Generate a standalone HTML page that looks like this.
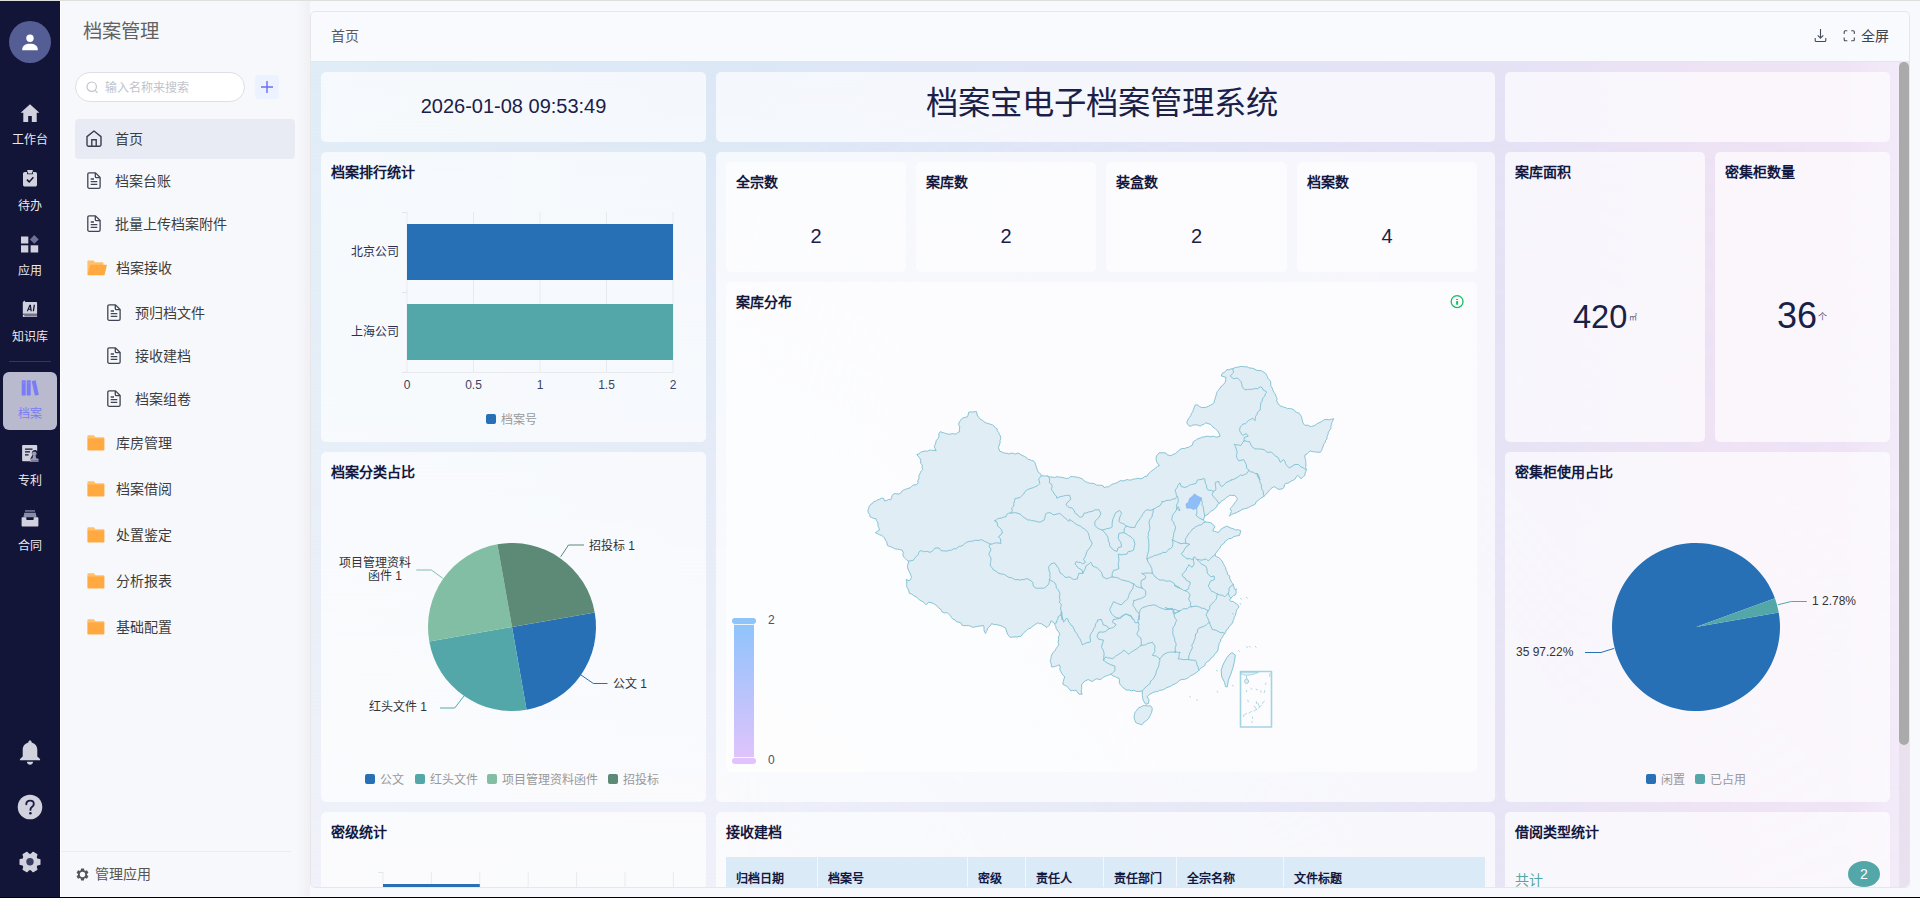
<!DOCTYPE html>
<html lang="zh-CN">
<head>
<meta charset="utf-8">
<title>档案管理</title>
<style>
*{box-sizing:border-box;margin:0;padding:0}
html,body{width:1920px;height:898px;overflow:hidden}
body{font-family:"Liberation Sans",sans-serif;position:relative;background:#f8f9fd;color:#333;font-size:14px}
.a{position:absolute}
svg{position:absolute;overflow:visible}
#topline{left:0;top:0;width:1920px;height:1px;background:#dee0de}
#botline{left:0;top:897px;width:1920px;height:1px;background:#000}
#nav{left:0;top:1px;width:60px;height:896px;background:#121438}
#navsep{left:60px;top:1px;width:1px;height:896px;background:#fff}
.nl{left:0;width:60px;text-align:center;font-size:12px;line-height:14px;color:#e9e9ee}
#side{left:61px;top:1px;width:249px;height:895px;background:#f7f8fc}
#sideshadow{left:296px;top:1px;width:14px;height:895px;background:linear-gradient(to right,rgba(235,235,240,0),rgba(239,239,244,.95))}
.mi{font-size:14px;line-height:20px;color:#3d3d3d;white-space:nowrap}
#main{left:311px;top:11px;width:1598px;height:877px;border:1px solid #e7e7ea;border-radius:8px 8px 8px 8px;background:#f9fafe;overflow:hidden}
#dash{left:0;top:50px;width:1596px;height:825px;background:linear-gradient(to right,#dbe9f6 0%,#dfe7f6 40%,#e6e2f5 70%,#efe0f6 100%)}
.c{position:absolute;background:rgba(255,255,255,.69);border-radius:5px}
.ci{position:absolute;background:rgba(255,255,255,.62);border-radius:5px}
.t{position:absolute;font-size:13px;font-weight:bold;color:#14183f;line-height:16px;white-space:nowrap}
.lg{position:absolute;font-size:12px;color:#999;line-height:14px;white-space:nowrap}
.lb{position:absolute;font-size:12px;color:#333;line-height:14px;white-space:nowrap}
</style>
</head>
<body>
<div class="a" id="nav"></div>
<div class="a" id="navsep"></div>
<div class="a" id="topline"></div>
<!-- avatar -->
<div class="a" style="left:9px;top:21px;width:42px;height:42px;border-radius:50%;background:#555e94"></div>
<svg style="left:20px;top:32px" width="20" height="20" viewBox="0 0 20 20"><circle cx="10" cy="6.2" r="3.7" fill="#fff"/><path d="M2.2 17.6c0-4 3.3-5.8 7.8-5.8s7.8 1.8 7.8 5.8v.6H2.2z" fill="#fff"/></svg>
<!-- 工作台 -->
<svg style="left:20px;top:103px" width="20" height="20" viewBox="0 0 20 20"><path d="M10 1.2L.6 9.8h2.7V19h4.9v-6h3.6v6h4.9V9.8h2.7z" fill="#d2d2de"/></svg>
<div class="a nl" style="top:133px">工作台</div>
<!-- 待办 -->
<svg style="left:22px;top:170px" width="16" height="17" viewBox="0 0 16 17"><path d="M5 1.9V1.2C5 .5 5.5 0 6.2 0h3.6C10.500 0 11 .5 11 1.200v.7h2.200c1 0 1.800.8 1.800 1.800v11.100c0 1-.8 1.800-1.800 1.800H2.800c-1 0-1.800-.8-1.800-1.800V3.700c0-1 .8-1.800 1.800-1.800z" fill="#d2d2de"/><rect x="5" y="1.300" width="6" height="2.900" rx=".6" fill="#121438"/><rect x="5.800" y=".8" width="4.400" height="2.600" rx=".5" fill="#d2d2de"/><path d="M4.900 9.600l2.300 2.300 4.200-4.600" fill="none" stroke="#121438" stroke-width="1.500"/></svg>
<div class="a nl" style="top:199px">待办</div>
<!-- 应用 -->
<svg style="left:21px;top:235px" width="18" height="18" viewBox="0 0 18 18"><rect x="0" y="1.500" width="7.300" height="7" fill="#d2d2de"/><rect x="0" y="10.300" width="7.300" height="7.200" fill="#d2d2de"/><rect x="9.600" y="10.300" width="7.600" height="7.200" fill="#d2d2de"/><path d="M13.300 0l4.400 4.400-4.400 4.400-4.400-4.400z" fill="#6e7196"/></svg>
<div class="a nl" style="top:264px">应用</div>
<!-- 知识库 -->
<svg style="left:22px;top:300px" width="16" height="18" viewBox="0 0 16 18"><path d="M.8 2.200L2.400.6l1 1.300h10.800c.5 0 .9.400.9.900v10.900H.8z" fill="#d2d2de"/><path d="M.8 14.600h14.300v1H2.300v.6h12.800v.9H1.700c-.5 0-.9-.4-.9-.9z" fill="#d2d2de"/><path d="M4.800 11.200l2.600-6.400h1.500l.9 6.400H8.500l-.15-1.400H6.500l-.5 1.400zM7 8.700h1.250L8 6.400zM10.700 11.200l1-6.400H13l-1 6.400z" fill="#121438"/></svg>
<div class="a nl" style="top:330px">知识库</div>
<div class="a" style="left:9px;top:361px;width:42px;height:1px;background:#33365a"></div>
<!-- 档案 active -->
<div class="a" style="left:3px;top:372px;width:54px;height:58px;border-radius:6px;background:#b9bace"></div>
<svg style="left:21px;top:380px" width="18" height="16" viewBox="0 0 18 16"><rect x=".7" y=".3" width="4" height="15.200" rx=".5" fill="#7a7cf6"/><rect x="5.700" y=".3" width="4" height="15.200" rx=".5" fill="#7a7cf6"/><path d="M10.700 1.200l3.400-.9c.3-.1.500.1.600.3l3 13.700c.1.300-.1.500-.3.600l-3 .7c-.3.100-.500-.1-.600-.3z" fill="#7a7cf6"/><path d="M2 2.500h1.400v.8H2zM7 2.500h1.400v.8H7z" fill="#b9bace" opacity=".7"/></svg>
<div class="a nl" style="top:407px;color:#7a7cf6">档案</div>
<!-- 专利 -->
<svg style="left:22px;top:445px" width="17" height="17" viewBox="0 0 17 17"><path d="M1 0h13.300c.5 0 .9.400.9.900v5.300c-.9-1.200-2.700-1.500-4-.6-1.500 1-1.800 3-.8 4.400l-1.800 3.200c-.3.600-.2 1.300.2 1.800l.8 1.200H1c-.5 0-.9-.4-.9-.9V.9C.100.400.500 0 1 0z" fill="#d2d2de"/><path d="M3 3.400h7.500v1.300H3zM3 6.300h5v1.300H3zM3 9.200h3.600v1.300H3z" fill="#121438"/><circle cx="12.300" cy="8.700" r="2.300" fill="#9a9bb5"/><path d="M11 10.800h2.600l.7 2.600h1.400c.5 0 .9.400.9.900v1.500H8v-1.500c0-.5.400-.9.900-.9h1.400z" fill="#9a9bb5"/><rect x="8" y="16.200" width="8.600" height=".8" fill="#9a9bb5"/></svg>
<div class="a nl" style="top:474px">专利</div>
<!-- 合同 -->
<svg style="left:21px;top:510px" width="18" height="17" viewBox="0 0 18 17"><rect x="4" y=".3" width="10" height="1.300" fill="#8b8ca8"/><path d="M3.300 2.700h11.400l.9 4.500H2.400z" fill="#8b8ca8"/><path d="M.6 8.200c0-.6.400-1 1-1h3.700v1.700c0 .6.400 1 1 1h5.400c.6 0 1-.4 1-1V7.200h3.700c.6 0 1 .4 1 1v7.200c0 .6-.4 1-1 1H1.600c-.6 0-1-.4-1-1z" fill="#d2d2de"/></svg>
<div class="a nl" style="top:539px">合同</div>
<!-- bell -->
<svg style="left:19px;top:740px" width="22" height="26" viewBox="0 0 22 26"><path d="M11 .6c.9 0 1.600.7 1.600 1.500v.5c3.300.8 5.700 3.700 5.700 7.200v6.800l2.500 2.200c.3.300.3.700.3 1v.5H.9v-.5c0-.4.100-.8.400-1l2.400-2.200V9.800c0-3.500 2.400-6.400 5.700-7.200v-.5C9.400 1.300 10.100.6 11 .6z" fill="#d2d2de"/><path d="M7.900 21.700h6.200c0 1.700-1.400 3-3.100 3s-3.100-1.300-3.100-3z" fill="#d2d2de"/></svg>
<!-- help -->
<svg style="left:17px;top:794px" width="26" height="26" viewBox="0 0 26 26"><circle cx="13" cy="13" r="12.300" fill="#d2d2de"/><path d="M9.300 10.300c0-2.200 1.600-3.700 3.800-3.700s3.700 1.400 3.700 3.300c0 1.500-.8 2.300-1.900 3.100-1 .7-1.400 1.200-1.400 2.300v.6" fill="none" stroke="#1a1c44" stroke-width="1.900" stroke-linecap="round"/><circle cx="13.400" cy="19.300" r="1.300" fill="#1a1c44"/></svg>
<!-- gear -->
<svg style="left:18px;top:850px" width="24" height="24" viewBox="0 0 24 24"><path d="M19.10 9.28L21.76 9.84L21.76 14.16L19.10 14.72L17.91 16.78L18.76 19.37L15.01 21.54L13.19 19.51L10.81 19.51L8.99 21.54L5.24 19.37L6.09 16.78L4.90 14.72L2.24 14.16L2.24 9.84L4.90 9.28L6.09 7.22L5.24 4.63L8.99 2.46L10.81 4.49L13.19 4.49L15.01 2.46L18.76 4.63L17.91 7.22Z" fill="#d2d2de" stroke="#d2d2de" stroke-width="1.500" stroke-linejoin="round"/><circle cx="12" cy="11.800" r="3.700" fill="#3a3e62"/></svg>
<div class="a" id="side"></div><div class="a" id="sideshadow"></div>
<div class="a" style="left:83px;top:18px;font-size:19.300px;line-height:28px;color:#626262;white-space:nowrap">档案管理</div>
<div class="a" style="left:75px;top:72px;width:170px;height:30px;border:1px solid #dcdfe6;border-radius:15px;background:#fff"></div>
<svg style="left:86px;top:81px" width="13" height="13" viewBox="0 0 13 13"><circle cx="5.700" cy="5.700" r="4.700" fill="none" stroke="#c0c4cc" stroke-width="1.200"/><path d="M9.200 9.300l2.400 2.500" stroke="#c0c4cc" stroke-width="1.200" fill="none"/></svg>
<div class="a" style="left:105px;top:80px;font-size:12px;line-height:16px;color:#bfc3cb;white-space:nowrap">输入名称来搜索</div>
<div class="a" style="left:255px;top:75px;width:24px;height:24px;border-radius:4px;background:#ecf2ff"></div>
<svg style="left:261px;top:81px" width="12" height="12" viewBox="0 0 12 12"><path d="M6 0v12M0 6h12" stroke="#6a6df8" stroke-width="1.400" fill="none"/></svg>
<div class="a" style="left:75px;top:119px;width:220px;height:40px;border-radius:4px;background:#e9ebf4"></div>
<svg style="left:86px;top:130px" width="16" height="17" viewBox="0 0 16 17"><path d="M8 1L1 6.600v8.200c0 .8.600 1.400 1.400 1.400h11.200c.8 0 1.400-.6 1.400-1.400V6.600z" fill="none" stroke="#3a3f4f" stroke-width="1.400" stroke-linejoin="round"/><path d="M5.800 16v-6.300h4.400V16" fill="none" stroke="#3a3f4f" stroke-width="1.400"/></svg>
<div class="a mi" style="left:115px;top:129px">首页</div>
<svg style="left:87px;top:172px" width="14" height="17" viewBox="0 0 14 17"><path d="M2.200.9h6.300l4.600 4.600v9.400c0 .8-.6 1.400-1.400 1.400H2.200c-.8 0-1.400-.6-1.400-1.400V2.300C.8 1.500 1.400.9 2.200.9z" fill="none" stroke="#3f4554" stroke-width="1.300" stroke-linejoin="round"/><path d="M8.300 1.100v3.400c0 .7.500 1.200 1.200 1.200h3.400" fill="none" stroke="#3f4554" stroke-width="1.300"/><path d="M3.700 7h3.300M3.700 9.700h6.600M3.700 12.400h6.600" stroke="#3f4554" stroke-width="1.300" fill="none"/></svg>
<div class="a mi" style="left:115px;top:171px">档案台账</div>
<svg style="left:87px;top:215px" width="14" height="17" viewBox="0 0 14 17"><path d="M2.200.9h6.300l4.600 4.600v9.400c0 .8-.6 1.400-1.400 1.400H2.200c-.8 0-1.400-.6-1.400-1.400V2.300C.8 1.500 1.400.9 2.200.9z" fill="none" stroke="#3f4554" stroke-width="1.300" stroke-linejoin="round"/><path d="M8.300 1.100v3.400c0 .7.500 1.200 1.200 1.200h3.400" fill="none" stroke="#3f4554" stroke-width="1.300"/><path d="M3.700 7h3.300M3.700 9.700h6.600M3.700 12.400h6.600" stroke="#3f4554" stroke-width="1.300" fill="none"/></svg>
<div class="a mi" style="left:115px;top:214px">批量上传档案附件</div>
<svg style="left:87px;top:260px" width="20" height="16" viewBox="0 0 20 16"><path d="M1.300.5h4.900c.4 0 .7.200.9.500l.9 1.300h7.600c.5 0 .9.400.9.900v2.300H3.800L.4 14.300V1.400c0-.5.400-.9.900-.9z" fill="#ffc069"/><path d="M4.200 4.700h14.900c.5 0 .8.400.7.900l-2.100 8.800c-.1.500-.6.800-1.100.8H1.100c-.5 0-.8-.4-.7-.9L2.900 5.700c.2-.6.700-1 1.300-1z" fill="#ffa940"/></svg>
<div class="a mi" style="left:116px;top:258px">档案接收</div>
<svg style="left:107px;top:304px" width="14" height="17" viewBox="0 0 14 17"><path d="M2.200.9h6.300l4.600 4.600v9.400c0 .8-.6 1.400-1.400 1.400H2.200c-.8 0-1.400-.6-1.400-1.400V2.300C.8 1.500 1.400.9 2.200.9z" fill="none" stroke="#3f4554" stroke-width="1.300" stroke-linejoin="round"/><path d="M8.300 1.100v3.400c0 .7.500 1.200 1.200 1.200h3.400" fill="none" stroke="#3f4554" stroke-width="1.300"/><path d="M3.700 7h3.300M3.700 9.700h6.600M3.700 12.400h6.600" stroke="#3f4554" stroke-width="1.300" fill="none"/></svg>
<div class="a mi" style="left:135px;top:303px">预归档文件</div>
<svg style="left:107px;top:347px" width="14" height="17" viewBox="0 0 14 17"><path d="M2.200.9h6.300l4.600 4.600v9.400c0 .8-.6 1.400-1.400 1.400H2.200c-.8 0-1.400-.6-1.400-1.400V2.300C.8 1.500 1.400.9 2.200.9z" fill="none" stroke="#3f4554" stroke-width="1.300" stroke-linejoin="round"/><path d="M8.300 1.100v3.400c0 .7.500 1.200 1.200 1.200h3.400" fill="none" stroke="#3f4554" stroke-width="1.300"/><path d="M3.700 7h3.300M3.700 9.700h6.600M3.700 12.400h6.600" stroke="#3f4554" stroke-width="1.300" fill="none"/></svg>
<div class="a mi" style="left:135px;top:346px">接收建档</div>
<svg style="left:107px;top:390px" width="14" height="17" viewBox="0 0 14 17"><path d="M2.200.9h6.300l4.600 4.600v9.400c0 .8-.6 1.400-1.400 1.400H2.200c-.8 0-1.400-.6-1.400-1.400V2.300C.8 1.500 1.400.9 2.200.9z" fill="none" stroke="#3f4554" stroke-width="1.300" stroke-linejoin="round"/><path d="M8.300 1.100v3.400c0 .7.500 1.200 1.200 1.200h3.400" fill="none" stroke="#3f4554" stroke-width="1.300"/><path d="M3.700 7h3.300M3.700 9.700h6.600M3.700 12.400h6.600" stroke="#3f4554" stroke-width="1.300" fill="none"/></svg>
<div class="a mi" style="left:135px;top:389px">档案组卷</div>
<svg style="left:87px;top:435px" width="18" height="16" viewBox="0 0 18 16"><path d="M1.300.3h5.200c.4 0 .7.200.9.500l.9 1.500h8.200c.5 0 .9.400.9.900v.9H.4V1.200c0-.5.400-.9.900-.9z" fill="#ffc069"/><path d="M.4 3.600h17v11c0 .6-.4 1-1 1H1.400c-.6 0-1-.4-1-1z" fill="#ffa940"/></svg>
<div class="a mi" style="left:116px;top:433px">库房管理</div>
<svg style="left:87px;top:481px" width="18" height="16" viewBox="0 0 18 16"><path d="M1.300.3h5.200c.4 0 .7.200.9.500l.9 1.500h8.200c.5 0 .9.400.9.900v.9H.4V1.200c0-.5.400-.9.900-.9z" fill="#ffc069"/><path d="M.4 3.600h17v11c0 .6-.4 1-1 1H1.400c-.6 0-1-.4-1-1z" fill="#ffa940"/></svg>
<div class="a mi" style="left:116px;top:479px">档案借阅</div>
<svg style="left:87px;top:527px" width="18" height="16" viewBox="0 0 18 16"><path d="M1.300.3h5.200c.4 0 .7.200.9.500l.9 1.500h8.200c.5 0 .9.400.9.900v.9H.4V1.200c0-.5.400-.9.900-.9z" fill="#ffc069"/><path d="M.4 3.600h17v11c0 .6-.4 1-1 1H1.400c-.6 0-1-.4-1-1z" fill="#ffa940"/></svg>
<div class="a mi" style="left:116px;top:525px">处置鉴定</div>
<svg style="left:87px;top:573px" width="18" height="16" viewBox="0 0 18 16"><path d="M1.300.3h5.200c.4 0 .7.200.9.500l.9 1.500h8.200c.5 0 .9.400.9.900v.9H.4V1.200c0-.5.400-.9.900-.9z" fill="#ffc069"/><path d="M.4 3.600h17v11c0 .6-.4 1-1 1H1.400c-.6 0-1-.4-1-1z" fill="#ffa940"/></svg>
<div class="a mi" style="left:116px;top:571px">分析报表</div>
<svg style="left:87px;top:619px" width="18" height="16" viewBox="0 0 18 16"><path d="M1.300.3h5.200c.4 0 .7.200.9.500l.9 1.500h8.200c.5 0 .9.400.9.900v.9H.4V1.200c0-.5.400-.9.900-.9z" fill="#ffc069"/><path d="M.4 3.600h17v11c0 .6-.4 1-1 1H1.400c-.6 0-1-.4-1-1z" fill="#ffa940"/></svg>
<div class="a mi" style="left:116px;top:617px">基础配置</div>
<div class="a" style="left:61px;top:851px;width:230px;height:1px;background:#ebedf2"></div>
<svg style="left:75px;top:867px" width="15" height="15" viewBox="0 0 24 24"><path d="M19.140 12.940c.04-.3.060-.61.060-.94 0-.32-.02-.64-.07-.94l2.030-1.580c.18-.14.230-.41.120-.61l-1.920-3.320c-.12-.22-.37-.29-.59-.22l-2.390.96c-.5-.38-1.030-.7-1.620-.94l-.36-2.540c-.04-.24-.24-.41-.48-.41h-3.840c-.24 0-.43.170-.47.410l-.36 2.540c-.59.240-1.130.570-1.620.94l-2.390-.96c-.22-.08-.47 0-.59.220L2.740 8.870c-.12.210-.08.470.12.610l2.030 1.580c-.05.300-.09.630-.09.940s.02.640.07.940l-2.030 1.580c-.18.140-.23.410-.12.610l1.920 3.320c.12.220.37.290.59.220l2.390-.96c.5.380 1.030.7 1.620.94l.36 2.540c.05.240.24.410.48.410h3.840c.24 0 .44-.17.470-.41l.36-2.540c.59-.24 1.130-.56 1.620-.94l2.390.96c.22.080.47 0 .59-.22l1.920-3.320c.12-.22.070-.47-.12-.61l-2.010-1.580z" fill="#555"/><circle cx="12" cy="12" r="4.300" fill="#f7f8fc"/></svg>
<div class="a" style="left:95px;top:864px;font-size:14px;line-height:20px;color:#555;white-space:nowrap">管理应用</div>
<div class="a" style="left:310px;top:11px;width:1600px;height:877px;border-radius:5px;background:#f9fafe"></div>
<div class="a" style="left:331px;top:26px;font-size:14px;line-height:20px;color:#595959;white-space:nowrap">首页</div>
<svg style="left:1814px;top:28px" width="14" height="15" viewBox="0 0 14 15"><path d="M6.500 1v9M3.700 7.300l2.800 2.800 2.800-2.800M1.200 10v2.500c0 .6.400 1 1 1h8.600c.6 0 1-.4 1-1V10" fill="none" stroke="#444b5a" stroke-width="1.100" stroke-linejoin="round"/></svg>
<svg style="left:1843px;top:30px" width="13" height="12" viewBox="0 0 13 12"><path d="M1.200 4V1.800c0-.6.400-1 1-1h2.100M8.200.8h2.100c.6 0 1 .4 1 1V4M11.300 7.600v2.200c0 .6-.4 1-1 1H8.200M4.300 10.800H2.200c-.6 0-1-.4-1-1V7.600" fill="none" stroke="#444b5a" stroke-width="1.100"/></svg>
<div class="a" style="left:1861px;top:26px;font-size:14px;line-height:20px;color:#3c4353;white-space:nowrap">全屏</div>
<div class="a" id="dc" style="left:0;top:0;width:1920px;height:888px;clip-path:inset(62px 11px 1px 311px round 0 0 5px 5px)">
<div class="a" style="left:311px;top:62px;width:1598px;height:826px;background:linear-gradient(90deg,#e0edf7 0%,#dce8f6 25%,#e0e5f6 50%,#e5e2f5 74%,#eee2f5 87%,#efe3f6 96%,#f3ebf9 99.500%,#f3ebf9 100%)"></div>
<div class="a" style="left:311px;top:62px;width:1598px;height:826px;background:linear-gradient(180deg,rgba(244,242,250,0) 0%,rgba(244,242,250,.1) 12%,rgba(244,242,250,.36) 47%,rgba(244,242,250,.74) 92%,rgba(244,242,250,.8) 100%);-webkit-mask-image:linear-gradient(90deg,#000 0%,#000 26%,rgba(0,0,0,.45) 55%,rgba(0,0,0,.22) 78%,rgba(0,0,0,.12) 100%);mask-image:linear-gradient(90deg,#000 0%,#000 26%,rgba(0,0,0,.45) 55%,rgba(0,0,0,.22) 78%,rgba(0,0,0,.12) 100%)"></div>
<div class="c" style="left:321px;top:72px;width:385px;height:70px"></div>
<div class="c" style="left:716px;top:72px;width:779px;height:70px"></div>
<div class="c" style="left:1505px;top:72px;width:385px;height:70px"></div>
<div class="a" style="left:321px;top:72px;width:385px;height:70px;line-height:68px;text-align:center;font-size:20px;color:#1b2048;white-space:nowrap">2026-01-08 09:53:49</div>
<div class="a" style="left:716px;top:72px;width:779px;height:70px;line-height:62px;text-align:center;font-size:32.300px;color:#1b2048;white-space:nowrap;padding-right:8px">档案宝电子档案管理系统</div>
<div class="c" style="left:321px;top:152px;width:385px;height:290px"></div>
<div class="t" style="left:331px;top:163px;font-size:14px;line-height:18px">档案排行统计</div>
<svg style="left:0;top:0" width="1920" height="888" viewBox="0 0 1920 888" shape-rendering="auto"><path d="M407 212V372" stroke="#e9eaf0" stroke-width="1"/><path d="M473.5 212V372" stroke="#e9eaf0" stroke-width="1"/><path d="M540 212V372" stroke="#e9eaf0" stroke-width="1"/><path d="M606.5 212V372" stroke="#e9eaf0" stroke-width="1"/><path d="M673 212V372" stroke="#e9eaf0" stroke-width="1"/><path d="M402 212.500H407M402 292.500H407M402 372.500H407" stroke="#e3e4ec" stroke-width="1"/><path d="M407 372.500H673.500" stroke="#e9eaf0" stroke-width="1"/><rect x="407" y="224" width="266" height="56" fill="#2770b5"/><rect x="407" y="304" width="266" height="56" fill="#54a7a9"/></svg>
<div class="lb" style="left:300px;width:99px;text-align:right;top:245px;color:#2b3052">北京公司</div>
<div class="lb" style="left:300px;width:99px;text-align:right;top:325px;color:#2b3052">上海公司</div>
<div class="lb" style="left:387px;width:40px;text-align:center;top:378px;color:#3d4262">0</div>
<div class="lb" style="left:453.5px;width:40px;text-align:center;top:378px;color:#3d4262">0.5</div>
<div class="lb" style="left:520px;width:40px;text-align:center;top:378px;color:#3d4262">1</div>
<div class="lb" style="left:586.5px;width:40px;text-align:center;top:378px;color:#3d4262">1.5</div>
<div class="lb" style="left:653px;width:40px;text-align:center;top:378px;color:#3d4262">2</div>
<div class="a" style="left:486px;top:414px;width:10px;height:10px;border-radius:2px;background:#2770b5"></div>
<div class="lg" style="left:501px;top:413px">档案号</div>
<div class="c" style="left:321px;top:452px;width:385px;height:350px"></div>
<div class="t" style="left:331px;top:463px;font-size:14px;line-height:18px">档案分类占比</div>
<div class="lb" style="left:589px;top:538.500px">招投标 1</div>
<div class="lb" style="left:613px;top:677px">公文 1</div>
<div class="lb" style="left:300px;width:127px;text-align:right;top:700px">红头文件 1</div>
<div class="lb" style="left:300px;width:111px;text-align:right;top:557px;line-height:12.500px">项目管理资料<br><span style="padding-right:9px">函件 1</span></div>
<div class="a" style="left:365px;top:774px;width:10px;height:10px;border-radius:2px;background:#2770b5"></div>
<div class="lg" style="left:380px;top:773px">公文</div>
<div class="a" style="left:415px;top:774px;width:10px;height:10px;border-radius:2px;background:#54a7a9"></div>
<div class="lg" style="left:430px;top:773px">红头文件</div>
<div class="a" style="left:487px;top:774px;width:10px;height:10px;border-radius:2px;background:#82bea3"></div>
<div class="lg" style="left:502px;top:773px">项目管理资料函件</div>
<div class="a" style="left:608px;top:774px;width:10px;height:10px;border-radius:2px;background:#5c8a76"></div>
<div class="lg" style="left:623px;top:773px">招投标</div>
<div class="c" style="left:716px;top:152px;width:779px;height:650px"></div>
<div class="ci" style="left:726px;top:162px;width:180px;height:110px"></div>
<div class="t" style="left:736px;top:173px;font-size:14px;line-height:18px">全宗数</div>
<div class="a" style="left:726px;top:222px;width:180px;text-align:center;font-size:20px;line-height:28px;color:#1b2048">2</div>
<div class="ci" style="left:916px;top:162px;width:180px;height:110px"></div>
<div class="t" style="left:926px;top:173px;font-size:14px;line-height:18px">案库数</div>
<div class="a" style="left:916px;top:222px;width:180px;text-align:center;font-size:20px;line-height:28px;color:#1b2048">2</div>
<div class="ci" style="left:1106px;top:162px;width:181px;height:110px"></div>
<div class="t" style="left:1116px;top:173px;font-size:14px;line-height:18px">装盒数</div>
<div class="a" style="left:1106px;top:222px;width:181px;text-align:center;font-size:20px;line-height:28px;color:#1b2048">2</div>
<div class="ci" style="left:1297px;top:162px;width:180px;height:110px"></div>
<div class="t" style="left:1307px;top:173px;font-size:14px;line-height:18px">档案数</div>
<div class="a" style="left:1297px;top:222px;width:180px;text-align:center;font-size:20px;line-height:28px;color:#1b2048">4</div>
<div class="ci" style="left:726px;top:282px;width:751px;height:490px"></div>
<div class="t" style="left:736px;top:293px;font-size:14px;line-height:18px">案库分布</div>
<svg style="left:1450px;top:295px" width="14" height="14" viewBox="0 0 14 14"><circle cx="7.100" cy="6.600" r="5.950" fill="none" stroke="#12c062" stroke-width="1.300"/><rect x="6" y="3.900" width="2.200" height="1.100" rx=".5" fill="#12c062"/><rect x="6.100" y="6" width="2" height="3.700" rx=".4" fill="#12c062"/></svg>
<svg style="left:0;top:0" width="1920" height="888" viewBox="0 0 1920 888" fill="none" stroke-linejoin="round" stroke-linecap="round">
<path d="M868.0 510.3L868.7 508.2L869.4 506.1L870.7 504.3L872.5 503.4L873.7 501.6L875.8 501.1L877.4 500.0L879.4 499.3L881.3 498.3L883.4 498.2L884.7 500.9L886.7 500.5L888.6 499.5L890.7 499.6L891.5 497.7L892.1 495.7L893.4 494.0L895.2 493.6L897.0 493.9L898.8 494.0L900.7 493.2L901.8 491.2L903.5 490.2L905.4 489.3L907.6 488.5L910.0 488.0L911.8 486.2L913.8 484.8L916.4 484.8L918.1 482.9L917.8 480.6L919.0 478.5L918.8 476.2L919.6 474.4L920.4 472.6L921.3 470.9L922.8 469.5L921.9 467.4L922.4 465.1L920.6 463.2L920.9 460.9L920.2 458.8L919.2 457.3L917.8 456.0L916.8 454.5L918.9 453.9L920.7 452.2L922.9 451.5L925.1 451.0L927.5 451.2L929.5 450.1L931.7 450.2L934.0 450.3L936.2 450.8L934.2 446.8L935.2 444.7L935.8 442.5L936.4 440.2L938.2 438.4L938.9 436.2L938.9 433.7L940.2 431.7L942.0 432.3L943.8 432.9L945.6 433.4L947.9 434.2L950.2 434.1L952.6 433.6L954.9 434.1L956.7 433.7L957.9 432.3L959.6 431.8L959.4 429.4L959.8 426.9L958.7 424.5L959.2 422.1L960.4 420.7L961.3 419.1L962.9 418.0L967.6 416.7L968.9 412.0L971.4 412.0L973.9 411.9L976.3 411.4L977.6 416.0L979.2 417.6L980.5 419.5L982.8 420.4L984.3 422.1L986.2 423.0L988.3 423.5L990.3 424.2L992.3 424.7L993.9 426.0L995.2 427.6L997.0 428.7L997.3 430.8L998.7 432.4L999.3 434.3L1000.4 436.1L1000.8 438.4L1000.0 440.6L1000.1 442.8L998.4 447.5L999.7 451.2L1002.1 452.1L1004.4 453.2L1007.0 453.2L1009.1 454.0L1011.4 453.1L1013.5 453.4L1015.6 454.1L1017.9 453.0L1020.0 454.1L1022.0 455.4L1024.3 456.3L1026.4 457.6L1028.0 459.5L1029.9 459.5L1031.5 460.6L1033.4 460.8L1035.0 462.9L1035.8 465.3L1036.6 467.8L1037.4 470.2L1038.4 472.4L1040.5 473.7L1041.4 475.9L1043.4 475.8L1045.4 476.0L1047.4 475.9L1049.7 476.9L1052.1 477.1L1054.5 477.5L1057.0 476.6L1059.3 477.2L1061.7 477.3L1064.1 477.9L1066.3 478.4L1068.5 478.4L1070.5 476.6L1072.6 476.5L1074.8 476.9L1077.4 477.2L1079.8 477.9L1082.2 478.9L1085.5 481.8L1087.6 482.4L1089.7 483.3L1092.1 483.3L1094.3 483.5L1096.2 485.1L1098.4 485.2L1100.7 485.3L1102.9 485.6L1104.2 487.6L1106.4 486.9L1108.7 486.7L1110.6 485.3L1112.6 484.1L1114.8 483.5L1116.9 482.7L1118.9 481.5L1120.7 480.4L1123.0 481.1L1125.0 480.4L1126.9 479.5L1129.2 480.1L1131.4 479.9L1133.6 479.0L1135.8 478.9L1138.0 478.2L1140.3 478.9L1142.6 478.2L1144.6 476.6L1147.0 476.2L1148.2 474.0L1150.0 472.5L1151.6 470.8L1153.7 469.5L1155.6 468.0L1157.4 466.4L1159.7 465.5L1158.2 464.2L1157.1 462.6L1156.3 460.8L1156.1 457.5L1156.7 455.7L1157.9 454.3L1159.0 452.8L1163.7 452.8L1165.8 453.0L1167.1 454.8L1169.1 455.3L1171.0 455.9L1172.4 454.8L1174.0 454.1L1175.7 453.5L1177.0 452.1L1178.5 450.7L1180.0 449.5L1182.1 448.4L1184.6 448.6L1186.7 447.6L1188.6 447.4L1190.2 446.2L1192.0 445.6L1193.4 441.5L1195.6 440.4L1197.6 438.8L1200.1 438.2L1202.0 437.1L1204.0 437.0L1206.0 436.4L1208.1 436.2L1210.0 436.9L1212.2 436.3L1214.2 436.4L1216.1 437.3L1220.1 436.2L1218.8 432.9L1217.8 431.0L1216.2 429.7L1214.8 428.2L1213.0 427.2L1211.7 425.5L1210.1 424.2L1205.4 422.8L1203.9 424.4L1201.8 425.0L1200.1 426.2L1198.4 425.3L1196.6 424.9L1194.7 424.8L1192.9 425.1L1191.2 426.0L1189.4 426.2L1186.7 422.8L1187.5 421.0L1188.2 419.1L1189.4 417.5L1190.8 415.7L1191.4 413.5L1192.8 411.7L1193.4 409.5L1194.3 407.1L1195.4 404.8L1197.7 405.1L1199.6 406.6L1201.7 407.6L1204.1 407.5L1206.4 407.2L1208.4 406.2L1210.4 405.2L1212.3 404.2L1214.1 402.8L1214.3 400.9L1215.0 399.2L1215.4 397.4L1216.1 395.4L1216.5 393.3L1217.4 391.4L1218.8 389.8L1220.1 388.1L1221.4 386.1L1223.4 384.7L1224.8 382.7L1225.7 381.0L1225.6 379.2L1226.1 377.4L1221.4 376.0L1222.1 373.4L1224.0 372.5L1225.6 371.3L1226.8 369.6L1228.9 369.8L1230.8 368.9L1232.8 368.7L1234.7 367.8L1236.7 367.3L1238.8 367.0L1240.8 366.5L1242.8 366.4L1244.8 366.9L1246.8 366.7L1248.7 367.7L1250.8 368.1L1252.9 368.3L1256.9 370.4L1261.5 370.7L1265.6 373.4L1266.6 375.1L1267.4 376.9L1268.2 378.6L1269.6 380.1L1270.8 381.9L1270.7 384.2L1271.0 386.3L1272.2 388.1L1273.0 390.5L1274.2 392.7L1275.6 394.8L1276.1 396.8L1277.1 398.7L1276.7 400.9L1277.6 402.8L1280.3 406.1L1282.1 406.4L1283.8 407.3L1285.6 407.5L1287.4 408.7L1289.6 408.4L1291.6 408.9L1293.6 409.5L1294.9 411.4L1296.7 412.4L1298.9 413.1L1300.3 414.8L1301.4 416.7L1302.0 418.7L1302.3 420.8L1302.9 422.6L1303.8 424.1L1305.0 425.5L1307.2 425.0L1309.3 426.1L1311.5 426.5L1313.7 425.8L1315.5 424.9L1317.2 423.7L1319.0 422.8L1321.0 422.0L1322.8 420.6L1324.7 419.6L1327.0 419.5L1329.3 419.8L1331.5 419.2L1333.7 418.8L1331.7 422.8L1331.4 424.6L1330.8 426.3L1331.0 428.2L1328.4 432.2L1328.0 434.4L1327.0 436.6L1327.0 438.9L1325.6 440.5L1325.1 442.6L1323.7 444.2L1323.2 446.3L1322.3 448.3L1321.6 450.4L1320.4 452.2L1316.3 452.2L1314.3 451.7L1312.2 451.6L1310.3 450.9L1308.6 452.3L1307.0 453.9L1305.0 454.9L1304.7 457.2L1305.6 459.3L1305.7 461.6L1305.9 463.6L1305.9 465.6L1305.6 467.6L1306.3 469.6L1305.9 471.5L1305.0 473.3L1305.0 475.3L1303.7 476.4L1302.3 477.5L1301.0 478.7L1297.6 475.3L1296.2 476.9L1295.3 478.8L1293.6 480.0L1291.6 480.9L1289.8 482.1L1287.9 483.2L1285.6 483.4L1284.4 485.0L1284.1 487.1L1282.9 488.7L1278.9 489.4L1277.1 488.5L1275.5 487.4L1273.6 486.7L1270.9 488.7L1269.2 490.5L1267.8 492.6L1265.9 494.2L1264.2 496.1L1260.2 498.7L1258.3 500.3L1256.2 501.7L1255.2 504.2L1252.9 505.4L1250.7 506.2L1248.7 507.5L1246.5 508.3L1244.2 508.8L1242.0 509.4L1240.1 510.8L1238.1 511.7L1236.1 512.8L1233.7 513.6L1231.5 514.5L1229.5 516.1L1230.5 513.7L1231.5 511.4L1230.1 508.8L1231.3 507.5L1232.4 506.1L1233.5 504.8L1234.8 502.8L1236.4 500.9L1237.5 498.7L1234.8 495.4L1233.0 495.4L1231.3 495.4L1229.5 495.4L1228.1 496.5L1226.5 497.3L1225.4 498.7L1223.2 500.1L1221.1 501.4L1219.4 503.4L1217.4 504.6L1216.7 507.0L1214.8 508.4L1213.4 510.1L1211.3 511.0L1209.6 512.4L1208.1 514.1L1204.7 516.1L1203.4 520.1L1205.4 522.1L1207.7 522.1L1210.0 522.6L1212.1 523.5L1214.8 526.8L1212.7 530.8L1214.5 531.4L1216.5 531.7L1218.1 532.8L1219.5 531.0L1220.9 529.3L1222.8 528.1L1226.8 526.1L1229.0 527.2L1231.1 528.2L1233.5 528.8L1235.8 530.0L1238.5 529.7L1240.8 530.8L1239.5 535.5L1237.5 535.7L1235.5 536.2L1233.5 536.8L1231.5 538.4L1228.8 538.6L1226.8 540.2L1225.1 541.2L1224.3 543.1L1222.8 544.2L1220.8 545.8L1219.8 548.3L1218.1 550.2L1217.1 551.8L1215.6 553.1L1215.0 554.9L1216.4 556.8L1218.9 557.5L1220.4 559.3L1222.1 560.9L1223.1 563.3L1224.4 565.5L1225.6 567.7L1226.1 570.3L1227.3 572.2L1227.5 574.5L1229.7 575.9L1229.6 578.3L1230.7 580.3L1231.5 582.3L1233.2 583.9L1233.7 586.0L1234.3 588.2L1235.5 590.0L1236.2 588.7L1236.0 590.7L1236.2 592.8L1235.5 594.8L1233.7 595.5L1232.2 596.8L1230.8 598.1L1229.5 600.1L1231.1 601.4L1233.3 601.5L1234.9 602.8L1237.0 604.3L1238.9 606.1L1238.4 608.1L1236.8 609.6L1236.2 611.5L1235.8 613.6L1235.3 615.6L1234.2 617.5L1233.8 619.3L1232.9 620.9L1232.9 622.8L1231.3 623.9L1230.3 625.6L1228.8 626.8L1228.2 628.7L1226.3 629.9L1225.7 631.8L1224.8 633.5L1223.3 635.2L1222.5 637.4L1220.8 638.9L1220.7 641.3L1219.2 643.3L1218.8 645.6L1218.2 647.8L1218.0 650.2L1216.8 652.2L1215.1 653.5L1214.0 655.2L1212.8 656.9L1210.8 658.2L1209.6 660.4L1207.5 661.6L1205.6 663.1L1204.8 665.5L1202.8 666.9L1201.2 667.8L1200.2 669.2L1198.8 670.3L1196.9 672.1L1194.8 673.6L1192.7 674.9L1190.4 675.8L1188.7 677.6L1186.6 678.6L1184.6 679.4L1182.2 679.4L1180.1 680.0L1178.4 681.6L1176.6 683.0L1174.6 684.1L1172.4 684.9L1170.8 686.2L1168.9 686.9L1167.0 687.5L1165.3 688.6L1163.6 689.5L1161.7 690.2L1159.6 690.3L1157.8 691.5L1155.7 691.7L1153.7 692.2L1149.7 694.2L1147.0 696.9L1149.0 699.6L1148.3 703.6L1145.7 704.2L1143.6 700.9L1142.9 699.2L1142.6 697.4L1142.3 695.6L1142.3 690.9L1139.0 691.5L1137.1 691.5L1135.3 690.9L1133.6 690.2L1131.4 690.8L1129.1 689.9L1126.9 690.2L1123.6 688.2L1122.3 686.6L1120.7 685.3L1119.6 683.5L1119.3 681.7L1119.5 679.9L1118.9 678.2L1117.0 677.9L1115.5 676.6L1113.6 676.2L1110.9 674.2L1109.2 674.9L1107.4 675.5L1105.6 676.2L1103.6 677.0L1102.1 678.5L1100.2 679.5L1096.2 678.8L1092.2 681.5L1088.2 679.5L1084.2 681.5L1081.5 684.9L1081.7 687.2L1081.5 689.6L1081.2 691.9L1082.2 694.2L1078.8 694.2L1076.1 690.2L1074.4 690.6L1072.5 690.4L1070.8 690.9L1068.1 687.5L1066.5 686.2L1064.6 685.2L1062.8 684.2L1063.3 681.7L1063.9 679.2L1064.8 676.8L1063.1 675.3L1061.8 673.5L1060.8 671.5L1059.8 669.4L1060.2 667.0L1059.4 664.8L1057.5 665.6L1055.5 666.3L1053.5 666.9L1051.4 666.8L1051.3 664.7L1050.9 662.7L1050.1 660.8L1051.0 658.6L1051.2 656.3L1052.1 654.1L1053.6 652.0L1055.4 650.1L1056.3 648.2L1057.6 646.5L1058.8 644.8L1058.1 642.3L1058.7 639.7L1058.3 637.2L1059.7 634.6L1058.8 632.1L1056.1 628.7L1056.0 626.8L1055.1 625.2L1054.5 623.4L1051.0 620.8L1050.2 623.2L1049.0 625.5L1047.0 627.5L1043.0 624.8L1041.4 623.7L1039.4 623.6L1037.7 622.8L1033.7 625.5L1032.0 626.7L1030.4 628.2L1028.3 628.8L1026.8 630.3L1025.2 631.6L1023.6 632.9L1021.0 636.2L1019.0 636.4L1017.0 637.0L1015.0 636.9L1013.2 636.9L1011.4 637.4L1009.6 636.9L1008.5 635.4L1007.5 634.0L1006.9 632.2L1005.6 628.2L1002.3 626.2L997.6 624.8L995.6 624.5L993.5 624.4L991.6 623.5L990.7 625.4L989.1 626.8L987.6 628.2L987.2 630.1L986.2 631.7L985.6 633.5L984.2 630.8L984.0 629.0L984.0 627.2L983.5 625.5L978.9 626.2L976.9 626.5L974.9 626.8L972.9 627.5L970.7 626.2L968.2 625.5L966.2 625.6L964.2 625.7L962.2 625.5L960.8 622.8L956.1 621.5L954.9 619.8L952.8 619.1L951.5 617.5L950.4 615.8L949.0 614.3L947.5 612.8L944.1 612.8L942.0 611.7L940.8 609.4L938.8 608.1L937.3 606.2L935.3 604.8L933.4 603.4L928.7 602.1L926.1 604.8L924.7 603.3L923.2 601.9L921.4 600.8L919.3 599.8L917.8 598.1L916.0 596.8L913.8 595.7L911.8 594.1L909.4 593.4L908.9 591.1L908.0 588.9L906.8 586.9L906.7 584.4L906.8 581.9L906.1 579.5L909.5 580.9L911.5 577.5L911.0 575.7L910.3 573.9L909.5 572.2L908.5 570.1L907.6 567.9L907.5 565.5L908.8 561.2L907.0 560.3L905.6 558.8L904.1 557.5L902.9 555.2L903.2 552.4L902.1 550.1L899.7 549.6L897.3 549.1L894.8 548.8L893.0 547.8L891.2 546.9L889.2 546.3L887.4 545.4L886.7 541.4L885.2 540.2L884.7 538.2L883.4 536.8L881.6 535.4L879.4 534.7L877.4 533.7L875.4 532.7L879.4 530.1L879.1 528.1L878.0 526.2L878.0 524.1L877.6 522.2L876.4 520.6L876.0 518.7L873.9 518.5L871.9 517.6L870.0 516.7L869.6 514.5L868.3 512.5Z" fill="#e0edf4" stroke="#86c4d6" stroke-width="1"/>
<path d="M1145.0 705.6L1146.8 705.8L1148.5 706.0L1150.3 705.6L1152.3 708.2L1151.7 712.3L1150.6 714.5L1149.6 716.8L1148.3 718.9L1146.6 720.4L1144.8 721.7L1143.0 723.2L1141.6 725.0L1139.9 724.2L1138.1 723.5L1136.3 723.0L1135.0 720.8L1134.3 718.3L1134.2 716.3L1134.5 714.3L1135.0 712.3L1136.5 710.9L1137.5 709.0L1139.0 707.6L1141.0 707.0L1142.8 705.8Z" fill="#e0edf4" stroke="#86c4d6" stroke-width="1"/>
<path d="M1232.3 652.8L1235.3 655.0L1234.5 661.2L1232.9 667.8L1230.7 674.5L1228.4 680.1L1227.3 686.8L1225.6 686.8L1224.5 682.3L1221.7 676.7L1221.2 670.1L1223.4 663.9L1226.8 657.8L1229.5 654.5Z" fill="#e0edf4" stroke="#86c4d6" stroke-width="1"/>
<path d="M1041.4 475.9L1038.7 478.9L1039.8 483.5L1038.0 485.4L1035.7 486.5L1033.4 487.6L1031.1 488.3L1028.8 489.1L1026.7 490.2L1024.8 491.8L1023.6 494.1L1021.7 495.7L1020.0 497.6L1015.1 498.5L1014.5 500.9L1013.8 503.4L1013.8 506.0L1011.6 508.0L1012.3 510.7L1011.0 513.0M1011.0 513.0L1008.7 513.2L1006.9 514.3L1005.8 516.8L1003.6 517.1L1001.7 518.0L999.7 518.3L997.8 518.7L996.2 520.1L994.3 520.7L997.0 522.1L997.7 526.1L999.2 527.3L1000.6 528.6L1001.7 530.1L1002.4 533.4L1000.8 534.2L999.9 535.9L998.4 536.8L1000.4 538.8L1001.0 543.4L996.3 542.8L994.3 543.1L992.4 544.0L990.3 544.1M990.3 544.1L986.3 542.1L984.3 541.3L982.5 540.1L980.3 539.8L978.1 540.6L975.8 540.1L973.6 540.8L971.6 541.3L969.5 541.3L967.5 542.0L965.6 542.8L963.8 544.6L961.6 546.1L959.4 546.2L957.6 547.5L955.8 548.8L953.6 548.8L951.6 550.2L949.1 550.3L946.9 551.1L944.9 551.0L942.9 550.9L940.9 550.5L938.9 547.9L934.9 548.1L933.8 549.7L932.3 550.9L930.8 552.1L929.0 552.1L927.3 551.4L925.5 551.5L923.7 551.7L922.0 550.8L920.2 550.8L918.8 552.4L918.3 554.6L916.8 556.1L915.4 557.2L914.4 558.7L913.5 560.2L908.8 561.2M990.3 544.1L989.0 546.1L991.0 549.5L989.0 553.5L989.3 555.4L990.5 557.0L991.0 558.8L990.9 560.6L990.6 562.4L990.3 564.2L990.7 566.2L992.0 567.8L993.0 569.5L995.1 570.7L997.1 572.1L999.0 573.5L1001.1 573.9L1003.2 574.2L1005.2 575.0L1007.0 576.2L1009.1 577.5L1011.6 577.7L1013.7 578.9L1015.7 579.8L1018.0 579.5L1020.0 580.2L1021.9 579.5L1024.0 579.6L1025.9 578.8L1028.0 578.9L1032.0 581.5L1033.0 583.5L1033.3 585.8L1034.7 587.6L1036.5 588.2L1038.3 588.3L1040.1 588.2L1044.1 588.2L1046.2 586.6L1048.1 584.9L1048.9 583.2L1049.4 581.4L1049.4 579.5M1011.0 513.0L1015.7 512.7L1020.0 514.0L1021.3 515.2L1022.5 516.4L1024.0 517.4L1028.0 520.1L1029.8 519.9L1031.6 520.7L1033.4 520.7L1035.6 521.1L1037.8 521.9L1040.1 522.1L1044.1 520.1L1044.9 517.9L1045.2 515.6L1046.1 513.4L1048.7 512.7L1050.9 512.9L1052.6 514.5L1054.8 514.7L1059.4 513.4L1061.2 514.4L1062.6 516.0L1064.1 517.4L1065.8 518.6L1067.4 519.9L1068.8 521.4L1069.5 519.4L1073.5 522.1L1075.1 523.4L1076.8 524.7L1078.8 525.4L1080.7 526.3L1082.3 527.7L1084.2 528.7L1085.7 529.9L1086.8 531.4L1088.2 532.7L1088.7 534.7L1089.4 536.7L1089.5 538.8L1092.2 542.8L1091.6 544.7L1090.7 546.5L1089.5 548.1L1086.8 551.5L1085.5 556.1L1083.5 559.5L1085.5 562.2L1082.8 563.9L1080.7 562.6L1078.3 562.3L1076.1 561.5L1075.1 564.2L1076.5 565.4L1077.3 567.1L1078.8 568.2L1082.2 570.2L1082.8 573.3M1049.4 579.5L1050.2 577.4L1049.8 575.1L1050.1 572.9L1049.2 571.0L1048.8 568.9L1048.7 566.8L1051.0 563.9L1054.5 562.8L1057.4 566.8L1058.7 568.6L1059.4 570.8L1060.1 572.9L1062.2 574.1L1063.8 575.7L1065.4 577.5L1069.5 576.9L1073.5 579.5L1077.5 578.9L1077.7 577.0L1078.4 575.2L1078.8 573.3L1082.8 573.3M1082.8 573.3L1084.8 569.5L1086.2 565.5L1088.0 564.7L1089.4 563.5L1090.8 562.2L1092.9 566.2L1095.2 567.1L1097.5 568.2L1098.9 569.5L1100.1 570.9L1101.5 572.2L1102.9 576.9L1106.9 578.9L1108.6 578.1L1110.4 577.4L1112.2 576.9M1047.4 475.9L1049.1 477.8L1049.7 480.1L1049.4 482.9L1051.8 484.4L1052.1 486.9L1051.4 489.6L1052.6 491.2L1053.8 492.9L1054.7 494.7L1056.4 496.0L1056.8 498.2L1058.9 497.1L1061.1 496.5L1063.4 496.0L1065.4 495.5L1067.5 495.4L1069.5 495.2L1070.8 498.9L1069.3 500.9L1067.2 502.5L1066.1 504.9L1067.7 506.5L1069.5 507.7L1072.0 507.8L1073.5 509.6L1075.5 513.6L1077.4 514.5L1078.5 516.3L1080.2 517.4L1082.8 516.3L1084.2 513.0L1086.5 513.0L1088.6 512.0L1090.8 511.6L1092.9 511.2L1094.7 509.9L1096.8 509.9L1098.9 509.6L1100.9 513.6L1098.9 517.6L1097.5 518.7L1094.9 521.4L1094.9 525.4L1096.4 527.1L1098.2 528.4L1100.2 529.4L1102.2 530.1M1102.2 530.1L1106.9 528.7L1108.8 528.4L1110.6 527.8L1112.2 526.7L1112.1 524.3L1112.3 522.0L1112.7 519.6L1113.6 517.4L1114.6 515.1L1115.6 512.7L1119.6 510.4L1121.6 513.4L1120.5 515.6L1119.6 518.0L1118.9 521.4L1120.5 522.7L1122.4 523.4L1124.3 524.1L1126.3 526.1M1126.3 526.1L1124.3 528.7L1124.0 532.7L1121.4 532.9L1118.9 533.4L1118.2 538.1L1118.9 539.8L1120.0 541.2L1120.9 542.8L1121.6 546.8L1118.2 547.5L1116.9 551.5L1113.6 550.1L1112.3 548.5L1110.6 547.3L1109.6 545.4L1109.5 543.1L1108.4 541.1L1108.2 538.8L1107.7 536.8L1106.6 535.1L1105.6 533.4L1102.2 530.1M1124.0 532.7L1126.2 533.9L1128.3 535.4L1130.3 536.4L1132.0 537.8L1133.6 539.4L1135.0 544.1L1134.4 546.1L1133.9 548.1L1133.6 550.1L1131.9 550.9L1130.2 551.4L1128.3 551.5L1126.9 554.1L1125.1 554.3L1123.4 554.5L1121.6 554.8L1118.2 554.1L1118.9 558.8L1118.8 560.6L1118.7 562.4L1118.2 564.2L1118.9 568.8L1117.1 569.2L1115.5 570.2L1113.6 570.2L1112.2 573.5L1112.2 576.9M1126.3 526.1L1130.9 527.4L1135.0 527.4L1135.7 525.3L1136.7 523.4L1137.6 521.4L1139.3 520.1L1140.1 518.2L1141.6 516.7L1142.3 514.7L1143.6 513.1L1144.7 511.4L1146.3 510.0L1148.1 509.8L1149.9 510.4L1151.7 510.0L1153.7 509.1M1153.7 509.1L1153.0 510.9L1153.0 512.9L1152.3 514.7L1152.1 516.8L1150.7 518.4L1149.6 520.1L1149.0 522.1L1149.3 524.5L1149.8 526.9L1149.7 529.4L1149.0 531.3L1148.1 533.3L1148.6 535.5L1147.7 537.4L1148.7 539.3L1148.6 541.4L1148.8 543.4L1149.0 545.4L1148.6 547.6L1148.9 549.9L1148.3 552.1L1147.5 554.3L1147.2 556.5L1147.0 558.8M1153.7 509.1L1155.7 508.1L1157.5 506.7L1159.7 506.0L1162.4 502.0L1161.7 501.6L1164.0 501.7L1166.1 500.5L1168.4 500.3L1170.7 500.2L1172.8 499.0L1175.1 498.9L1177.1 496.2L1176.2 494.5L1176.0 492.6L1175.1 490.9L1175.8 489.0L1177.3 487.6L1177.7 485.6L1180.0 482.9L1181.3 486.7L1185.3 487.4L1187.4 486.6L1189.4 485.2L1191.5 484.5L1193.8 484.0L1196.0 483.4L1197.4 480.0L1199.7 479.6L1202.0 479.4L1204.1 478.3L1204.9 479.9L1205.1 481.7L1205.4 483.4L1206.6 485.5L1206.6 488.1L1208.1 490.1L1209.9 490.2L1211.7 490.5L1213.4 491.4M1177.1 496.2L1178.0 497.9L1178.1 499.8L1178.4 501.6L1177.4 503.2L1176.7 505.0L1176.4 506.9L1177.4 508.4L1178.4 509.9L1180.0 510.9L1178.4 506.7L1176.7 508.0L1176.3 510.2L1175.2 512.0L1173.7 513.4L1172.5 515.5L1172.1 517.8L1171.7 520.1L1173.6 522.0L1174.2 524.6L1175.7 526.7L1175.2 529.0L1174.5 531.2L1173.7 533.4L1173.5 535.7L1173.2 537.9L1172.4 540.1M1172.4 540.1L1173.0 542.3L1172.7 544.6L1172.4 546.8L1170.7 548.5L1168.4 549.5L1167.0 551.5L1165.2 552.7L1162.8 552.1L1161.1 553.9L1159.0 554.1L1156.8 555.2L1154.4 555.5L1152.3 556.8L1150.4 557.2L1148.8 558.2L1147.0 558.8M1172.4 540.1L1176.4 541.7L1180.0 543.4M1147.0 558.8L1148.3 562.8L1149.9 564.3L1150.6 566.4L1151.7 568.2L1152.3 572.9M1152.3 572.9L1155.0 576.9L1156.9 577.9L1158.4 579.5L1160.4 580.2L1162.4 579.9L1164.4 580.4L1166.4 581.3L1168.4 580.9L1170.3 581.1L1172.0 582.2L1173.7 582.9L1176.4 586.9L1180.0 588.2L1178.2 586.9L1176.1 586.1L1174.0 585.4L1176.3 586.0L1178.3 587.1L1180.1 588.7L1182.0 589.0L1183.5 590.4L1185.4 590.7M1152.3 572.9L1150.6 573.3L1148.7 572.9L1147.0 573.3L1145.2 572.9L1143.4 573.5L1141.6 573.3L1143.8 574.6L1145.7 576.2L1145.0 578.9L1141.6 580.2L1141.0 582.0L1141.1 583.8L1141.0 585.6L1142.3 588.2M1112.2 576.9L1116.2 577.5L1118.5 578.1L1120.6 579.6L1122.9 580.2L1125.0 580.6L1127.0 581.2L1129.1 581.5L1130.9 582.9L1133.6 583.5L1134.8 584.8L1136.0 586.1L1137.6 586.9L1142.3 588.2M1133.6 583.5L1133.0 588.2L1130.3 592.2L1129.5 594.0L1128.5 595.6L1128.3 597.6L1127.3 599.3L1125.8 600.5L1124.3 601.6L1121.6 604.9L1117.6 603.6L1113.6 601.6L1111.6 605.6L1109.6 609.6L1110.5 611.2L1111.0 612.9L1112.2 614.3L1113.9 616.3L1116.2 617.6L1120.3 618.3L1122.0 616.9L1123.7 615.4L1125.6 614.3L1127.4 614.7L1129.1 615.2L1130.9 615.6L1131.9 618.0L1133.6 620.0L1130.9 616.0L1129.0 615.6L1127.5 614.4L1125.6 614.0L1123.7 614.9L1122.0 616.0L1120.3 617.2L1118.9 618.7L1117.1 618.8L1115.4 619.3L1113.6 619.4M1142.3 588.2L1145.7 590.9L1145.7 595.6L1144.0 596.9L1142.2 597.9L1140.3 598.9L1138.0 599.0L1135.9 600.3L1133.6 600.3L1133.7 602.1L1133.0 603.8L1133.0 605.6L1134.3 607.2L1135.6 608.9L1136.3 610.9L1139.0 613.6M1139.0 613.6L1139.5 615.7L1138.9 617.9L1139.0 620.0L1139.0 615.3L1139.0 617.8L1137.9 620.2L1138.3 622.7L1135.0 622.7L1134.4 620.7L1133.5 619.0L1131.6 617.8L1130.9 616.0M1139.0 613.6L1140.3 609.6L1142.0 608.0L1144.0 607.0L1146.3 606.6L1148.3 605.6L1150.1 605.6L1151.9 605.1L1153.7 604.9L1155.9 605.4L1157.7 606.5L1159.6 607.6L1161.7 608.3L1163.4 608.9L1165.2 609.4L1167.0 609.6L1168.9 609.5L1170.6 608.9L1172.4 608.3L1173.7 609.9L1173.9 612.0L1175.1 613.6L1176.6 612.5L1178.4 611.9L1180.0 610.9L1177.5 610.6L1175.2 609.3L1172.5 609.8L1170.1 609.1L1167.6 608.6L1165.3 607.5L1168.0 608.8L1172.4 608.4L1173.2 610.1L1173.0 612.0L1173.8 613.7M1049.4 579.5L1051.2 580.7L1053.1 581.6L1054.8 582.9L1056.1 585.1L1056.3 587.9L1058.2 589.9L1059.4 592.2L1060.0 594.2L1059.3 596.3L1059.7 598.3L1060.1 600.3L1059.4 602.5L1061.4 604.4L1060.9 606.7L1060.5 608.9L1061.4 610.9L1061.0 613.2L1061.1 615.5L1062.7 617.7L1062.1 620.0L1061.7 617.6L1061.3 615.2L1061.7 612.7M1061.7 612.7L1061.4 614.7L1058.1 616.7L1058.0 618.8L1056.7 620.6L1056.8 622.7L1054.5 623.4M1061.7 612.7L1062.0 615.0L1061.8 617.5L1063.2 619.6L1063.4 622.0L1064.8 620.9L1065.6 619.3L1066.8 618.0L1068.1 619.7L1068.7 621.8L1070.1 623.4L1070.9 625.2L1072.7 626.2L1073.5 628.0L1074.4 629.9L1075.3 631.8L1076.9 633.4L1077.5 635.4L1078.7 637.2L1080.0 638.9L1080.8 640.8L1081.7 642.7L1082.2 644.8L1084.5 643.8L1086.8 642.7L1090.2 642.1L1090.6 640.1L1090.1 638.1L1090.0 636.0L1090.8 634.1L1091.6 632.3L1093.1 630.9L1093.5 628.8L1094.9 627.4L1095.3 625.5L1095.8 623.6L1097.2 622.0L1097.5 620.0L1101.5 619.4L1101.9 621.2L1102.8 622.8L1102.9 624.7L1106.9 626.0L1108.9 628.7M1108.9 628.7L1105.6 631.4L1103.4 632.1L1101.1 632.0L1098.9 632.1L1096.9 636.1L1098.9 639.4L1103.5 640.1L1102.8 642.5L1102.0 644.9L1101.5 647.4L1102.9 649.4L1103.7 651.7L1104.2 654.1L1103.8 656.1L1103.8 658.1L1103.5 660.1M1103.5 660.1L1106.9 662.8L1110.9 664.8L1114.9 666.1L1114.9 670.8L1113.7 672.1L1112.3 673.2L1110.9 674.2M1103.5 660.1L1105.6 656.8L1107.6 658.0L1110.1 657.9L1112.2 658.8L1113.9 657.7L1115.4 656.3L1117.2 655.2L1118.9 654.1L1120.7 653.1L1122.4 651.8L1123.6 650.1L1125.3 651.3L1126.9 652.5L1128.3 654.1L1130.2 653.2L1131.7 651.6L1133.6 650.8L1137.6 648.1L1141.0 645.4M1108.9 628.7L1113.6 627.4L1116.2 624.7L1112.2 622.0L1113.6 619.4M1138.3 622.7L1139.1 624.6L1138.3 626.7L1139.0 628.7L1138.4 630.7L1137.3 632.6L1137.0 634.7L1138.4 635.8L1139.4 637.2L1141.0 638.1L1141.1 640.5L1141.4 643.0L1141.0 645.4M1141.0 645.4L1145.7 644.8L1147.7 643.3L1150.1 643.1L1152.3 642.1L1155.0 646.1L1154.9 647.9L1154.6 649.6L1155.0 651.4L1152.3 655.4L1156.3 656.1L1159.7 658.8M1159.7 658.8L1159.9 660.9L1159.1 662.8L1159.0 664.8L1158.3 667.1L1157.2 669.3L1156.3 671.5L1155.9 673.9L1154.8 676.1L1153.7 678.2L1152.3 679.9L1150.5 681.1L1150.1 683.6L1148.3 684.9L1146.7 686.4L1144.9 687.7L1143.6 689.5L1142.3 690.9M1159.7 658.8L1161.7 657.1L1163.0 654.8L1167.0 652.8L1168.8 652.3L1170.6 652.0L1172.4 652.1L1175.7 652.1M1173.8 613.7L1174.3 616.1L1175.2 618.3L1176.7 620.2L1175.6 622.4L1175.0 624.9L1173.4 626.8L1172.8 628.5L1173.0 630.4L1172.7 632.2L1172.9 634.6L1173.9 636.7L1174.7 638.9L1174.8 641.2L1176.0 643.3L1176.0 645.6L1175.2 647.7L1175.4 649.9L1174.7 652.0L1175.7 652.1M1174.7 652.0L1176.5 652.0L1178.3 652.5L1180.1 652.2L1179.0 654.3L1179.1 656.8L1178.0 658.9L1179.8 658.9L1181.6 659.3L1183.4 659.6L1185.2 659.6L1186.9 659.5L1188.7 659.6M1188.7 659.6L1188.7 657.0L1189.3 654.6L1190.1 652.2L1191.3 650.0L1192.4 647.8L1191.8 645.0L1193.4 642.9L1194.1 640.7L1195.0 638.5L1195.4 636.2L1195.6 633.9L1197.6 632.4L1197.4 630.0L1198.8 628.2L1201.0 627.4L1203.2 626.5L1205.4 625.5L1206.8 624.5L1208.0 623.2L1209.5 622.2M1209.5 622.2L1208.5 620.4L1207.9 618.5L1206.9 616.7L1206.1 614.8L1208.1 610.8M1209.5 622.2L1210.2 624.7L1211.3 627.0L1212.1 629.5L1216.1 630.2L1219.5 632.2L1221.3 632.6L1223.1 632.6L1224.8 633.5M1188.7 659.6L1190.9 660.0L1193.2 660.1L1195.4 660.3L1196.6 662.4L1196.9 664.8L1198.1 666.9L1198.8 670.3M1196.7 559.3L1200.1 562.7L1201.9 564.3L1204.1 565.3L1206.1 566.7L1206.9 568.9L1207.1 571.2L1207.5 573.4L1210.8 576.7L1214.1 576.0L1214.5 579.4L1210.1 581.4L1209.4 583.9L1208.1 586.1L1209.6 587.6L1210.4 589.6L1211.5 591.4L1213.7 591.9L1215.5 593.1L1217.5 594.1M1217.5 594.1L1219.9 595.0L1222.6 595.3L1224.8 596.8L1228.2 593.4L1229.0 591.2L1229.0 588.8L1230.2 586.7L1232.9 584.7M1228.2 593.4L1228.9 595.1L1229.7 596.7L1230.8 598.1M1217.5 594.1L1216.8 596.1L1216.6 598.3L1215.5 600.1L1214.2 601.4L1212.9 602.9L1211.5 604.1L1209.8 606.1L1209.7 608.8L1208.1 610.8M1208.1 610.8L1206.0 609.5L1203.9 608.4L1201.4 608.1L1199.7 607.2L1198.0 606.5L1196.1 606.1L1191.4 606.8M1191.4 606.8L1190.3 604.9L1190.7 602.6L1189.4 600.8L1188.7 598.8L1190.1 594.8L1188.9 593.1L1187.3 591.7L1185.4 590.7M1185.4 590.7L1188.7 588.7L1188.8 586.4L1190.0 584.4L1190.1 582.1L1186.1 580.1L1185.2 578.0L1183.0 576.8L1182.1 574.7L1183.3 573.0L1185.0 571.7L1186.1 570.0L1186.6 568.1L1188.2 566.6L1188.7 564.7L1192.1 567.4L1194.2 564.0L1193.6 561.5L1193.4 559.0M1191.4 606.8L1189.2 606.9L1187.6 608.7L1185.4 608.8L1183.2 608.7L1181.4 610.1L1177.4 612.1L1173.8 613.7M1232.8 368.7L1233.5 372.7L1230.1 376.0L1233.5 378.7L1237.5 378.0L1240.8 381.4L1241.5 383.1L1242.0 384.9L1242.2 386.7L1244.8 389.7L1247.3 389.6L1249.7 389.3L1252.2 389.4L1253.9 388.7L1255.7 388.6L1257.5 388.7L1260.2 386.7L1262.2 387.7L1263.1 389.9L1265.1 391.0L1266.9 392.1L1265.4 393.6L1264.9 395.8L1263.5 397.4L1262.4 399.1L1262.1 401.2L1260.9 402.8L1260.6 405.2L1260.3 407.6L1260.2 410.1L1257.5 412.1L1257.1 414.3L1255.6 416.3L1255.5 418.6L1254.9 420.8L1252.9 418.1L1250.8 419.4L1248.6 420.4L1246.8 422.2L1245.5 423.8L1243.1 423.9L1241.7 425.5L1240.2 426.8L1239.5 430.8L1240.7 432.3L1241.5 434.1L1242.8 435.5L1246.2 433.5L1248.2 436.2L1244.2 437.5L1244.2 440.9M1244.2 440.9L1246.0 440.9L1247.7 441.8L1249.5 441.5L1250.4 443.9L1251.5 446.2L1254.9 448.9L1256.7 448.8L1258.4 449.1L1260.2 448.9L1264.2 449.6L1266.9 452.2L1271.6 452.2L1274.9 455.6L1278.2 457.6L1279.3 459.9L1280.3 462.3L1283.6 459.6L1285.0 461.4L1285.5 463.7L1286.9 465.6L1289.6 468.3L1290.7 466.8L1292.5 466.3L1293.6 464.9L1298.3 464.3L1301.0 466.9L1302.9 467.6L1304.5 468.8L1306.3 469.6M1244.2 440.9L1242.7 442.2L1241.9 444.0L1240.8 445.6L1238.6 444.9L1236.3 444.9L1234.1 444.2L1235.5 446.4L1236.1 448.9L1237.0 451.0L1237.0 453.2L1236.4 455.4L1236.8 457.6L1238.8 460.9L1243.5 459.6L1244.5 461.1L1245.3 462.7L1246.2 464.3L1246.8 468.3L1248.8 470.3M1248.8 470.3L1250.6 471.8L1253.1 472.1L1254.9 473.6L1257.5 473.6L1258.7 475.6L1259.1 477.9L1260.2 480.0L1258.5 478.0L1257.4 475.8L1256.9 473.3L1258.0 475.6L1259.2 477.8L1259.6 480.3L1260.2 482.7L1261.4 484.8L1261.4 487.2L1262.0 489.5L1263.4 491.5L1263.3 493.9L1264.2 496.1M1248.8 470.3L1246.8 473.6L1244.8 474.3L1243.0 475.5L1240.6 475.0L1238.8 476.3L1237.0 477.6L1235.0 478.6L1233.1 479.6L1230.8 480.0L1231.5 480.0L1229.3 481.1L1227.0 482.1L1225.1 483.5L1223.5 485.5L1221.4 486.7L1220.3 485.0L1219.2 483.4L1218.8 481.4L1215.4 482.3L1215.3 484.3L1215.5 486.2L1215.9 488.1L1215.8 490.1L1213.4 491.4M1213.4 491.4L1212.1 494.7L1213.6 496.8L1215.4 498.7L1216.8 500.2L1217.7 502.1L1219.4 503.4M1201.4 498.1L1201.4 499.9L1202.1 501.6L1202.1 503.4L1202.1 505.3L1203.4 506.9L1203.4 508.8L1203.8 511.2L1204.4 513.6L1204.7 516.1M1196.7 508.1L1196.8 510.6L1196.8 513.0L1196.0 515.4L1199.4 518.1L1203.4 520.1M1205.4 522.1L1203.2 522.7L1201.7 524.8L1199.4 525.0L1197.4 526.1L1195.6 526.6L1194.4 528.2L1192.7 528.8L1191.3 531.0L1189.4 532.8L1188.2 534.4L1187.3 536.1L1186.2 537.7L1185.3 539.5L1186.0 543.5L1184.0 543.1L1182.0 543.7L1180.0 543.3M1186.0 543.5L1190.0 544.2L1186.0 546.9L1185.0 548.7L1183.9 550.4L1183.0 552.2L1181.3 553.5L1182.5 555.3L1184.1 556.5L1185.7 557.8L1187.4 558.9M1187.4 558.9L1189.4 558.4L1191.4 559.3L1193.4 559.0L1194.2 556.6L1196.7 559.3L1201.4 560.2L1206.1 558.9L1208.1 560.9L1209.6 559.7L1210.7 558.2L1212.1 556.9L1215.0 554.9" stroke="#86c4d6" stroke-width="1"/>
<path d="M1194.7 494.1L1197.4 496.1L1201.4 498.1L1200.1 501.4L1198.7 504.8L1196.7 508.1L1193.4 509.4L1190.7 508.1L1186.7 508.1L1186.0 504.1L1188.7 502.1L1189.4 498.7L1192.7 496.1Z" fill="#8ebdf9" stroke="#86b6ee" stroke-width=".8"/>
<rect x="1240.500" y="671.500" width="31" height="55.500" stroke="#a3d4e2" stroke-width="1.600"/>
<path d="M1241.300 672.300H1258.500C1256 674 1251 675 1247.500 675.300C1244.500 675.500 1242.500 674.500 1241.300 674Z" fill="#e0edf4" stroke="#86c4d6" stroke-width=".6"/>
<ellipse cx="1246.600" cy="681.300" rx="2" ry="2.300" fill="#e0edf4" stroke="#86c4d6" stroke-width=".7"/>
<path d="M1246.300 676.300l.5 2.200" stroke="#86c4d6" stroke-width=".8"/>
<path d="M1270 673.5L1269.6 676.5M1266 683L1265.3 684.5M1264.7 690.5L1264.3 692.5M1264.3 701L1262.5 703.5M1261.3 705.5L1258.5 708M1256.5 709.5L1254 711M1251.5 711.5L1249 713M1246.7 713.2L1244.5 714.8M1243.3 715L1243.8 716.5M1252.3 716.8L1252.7 718.5M1251.6 721.3L1252.3 722.5M1247.8 700.2L1248.3 701.8M1251 688.2L1252 689.5M1256 689.3L1257.5 689.8M1246.3 690.3L1246.7 691.8M1260.8 690.8L1261 692.3M1256.3 701.5L1256.5 703.5M1254.3 706.3L1256.8 709.8M1258 703L1259.5 707" stroke="#86c4d6" stroke-width=".8" opacity=".8"/>
<path d="M1189.7 696.5l.8 .6M1196.7 699.8l.8 .6M1238.7 650.8l.8 .6M1246.7 646.8l.8 .6M1249.5 646.3l.8 .6M1255.3 646.5l.8 .6M1217 691.5l.8 .6M1216.5 670.5l.8 .6M1232.5 685.5l.8 .6M1246.5 597.5l.8 .6M1240.5 598.5l.8 .6M1232.5 613.5l.8 .6M1240 603.5l.8 .6" stroke="#86c4d6" stroke-width="1" opacity=".8"/>
</svg>

<div class="a" style="left:734px;top:624px;width:20px;height:134px;background:linear-gradient(180deg,#8fc4fb,#e0c3fc)"></div>
<div class="a" style="left:732px;top:618px;width:24px;height:6px;border-radius:3px;background:#8fc4fb"></div>
<div class="a" style="left:732px;top:758px;width:24px;height:6px;border-radius:3px;background:#e0c3fc"></div>
<div class="a" style="left:734px;top:624px;width:20px;height:1px;background:rgba(255,255,255,.8)"></div>
<div class="a" style="left:734px;top:757px;width:20px;height:1px;background:rgba(255,255,255,.8)"></div>
<div class="lb" style="left:768px;top:613px;color:#4b5070">2</div>
<div class="lb" style="left:768px;top:753px;color:#4b5070">0</div>
<div class="c" style="left:1505px;top:152px;width:200px;height:290px"></div>
<div class="c" style="left:1715px;top:152px;width:175px;height:290px"></div>
<div class="t" style="left:1515px;top:163px;font-size:14px;line-height:18px">案库面积</div>
<div class="t" style="left:1725px;top:163px;font-size:14px;line-height:18px">密集柜数量</div>
<div class="a" style="left:1573px;top:296.500px;font-size:32.600px;line-height:40px;color:#1b2048;white-space:nowrap">420<span style="font-size:8px;position:relative;top:-8px;left:1.500px;color:#555b7a">㎡</span></div>
<div class="a" style="left:1777px;top:294px;font-size:36px;line-height:44px;color:#1b2048;white-space:nowrap">36<span style="font-size:9px;position:relative;top:-8px;left:1px;color:#555b7a">个</span></div>
<div class="c" style="left:1505px;top:452px;width:385px;height:350px"></div>
<div class="t" style="left:1515px;top:463px;font-size:14px;line-height:18px">密集柜使用占比</div>
<svg style="left:0;top:0" width="1920" height="888" viewBox="0 0 1920 888"><path d="M512 627L594.72 612.41A84 84 0 0 1 526.59 709.72Z" fill="#2770b5"/><path d="M512 627L526.59 709.72A84 84 0 0 1 429.28 641.59Z" fill="#54a7a9"/><path d="M512 627L429.28 641.59A84 84 0 0 1 497.41 544.28Z" fill="#82bea3"/><path d="M512 627L497.41 544.28A84 84 0 0 1 594.72 612.41Z" fill="#5c8a76"/><path d="M560.700 556.800L568.500 545H584" fill="none" stroke="#5c8a76" stroke-width="1"/><path d="M581 675L593.400 683.500H607.500" fill="none" stroke="#2770b5" stroke-width="1"/><path d="M464 696L454.700 708H440" fill="none" stroke="#54a7a9" stroke-width="1"/><path d="M442.800 578.300L431.300 570H416.300" fill="none" stroke="#82bea3" stroke-width="1"/><path d="M1696 627L1778.72 612.41A84 84 0 1 1 1774.93 598.27Z" fill="#2770b5"/><path d="M1696 627L1774.93 598.27A84 84 0 0 1 1778.72 612.41Z" fill="#54a7a9"/><path d="M1777.800 604.800L1791.200 601.500H1806.800" fill="none" stroke="#54a7a9" stroke-width="1"/><path d="M1614.100 648.400L1601 652.500H1585" fill="none" stroke="#2770b5" stroke-width="1"/></svg>
<div class="lb" style="left:1812px;top:594px">1 2.78%</div>
<div class="lb" style="left:1516px;top:645px">35 97.22%</div>
<div class="a" style="left:1646px;top:774px;width:10px;height:10px;border-radius:2px;background:#2770b5"></div>
<div class="lg" style="left:1661px;top:773px">闲置</div>
<div class="a" style="left:1695px;top:774px;width:10px;height:10px;border-radius:2px;background:#54a7a9"></div>
<div class="lg" style="left:1710px;top:773px">已占用</div>
<div class="c" style="left:321px;top:812px;width:385px;height:88px"></div>
<div class="c" style="left:716px;top:812px;width:779px;height:88px"></div>
<div class="c" style="left:1505px;top:812px;width:385px;height:88px"></div>
<div class="t" style="left:331px;top:823px;font-size:14px;line-height:18px">密级统计</div>
<div class="t" style="left:726px;top:823px;font-size:14px;line-height:18px">接收建档</div>
<div class="t" style="left:1515px;top:823px;font-size:14px;line-height:18px">借阅类型统计</div>
<svg style="left:0;top:0" width="1920" height="888" viewBox="0 0 1920 888"><path d="M383.0 872V888" stroke="#e9eaf0" stroke-width="1"/><path d="M431.4 872V888" stroke="#e9eaf0" stroke-width="1"/><path d="M479.8 872V888" stroke="#e9eaf0" stroke-width="1"/><path d="M528.2 872V888" stroke="#e9eaf0" stroke-width="1"/><path d="M576.6 872V888" stroke="#e9eaf0" stroke-width="1"/><path d="M625.0 872V888" stroke="#e9eaf0" stroke-width="1"/><path d="M673.4 872V888" stroke="#e9eaf0" stroke-width="1"/><path d="M378 872.500H383" stroke="#e3e4ec" stroke-width="1"/><rect x="383" y="884" width="96.800" height="6" fill="#2770b5"/></svg>
<div class="a" style="left:726px;top:857px;width:759px;height:41px;background:#dbeaf7"></div>
<div class="a" style="left:817px;top:857px;width:1px;height:41px;background:#f3f6fd"></div>
<div class="a" style="left:967px;top:857px;width:1px;height:41px;background:#f3f6fd"></div>
<div class="a" style="left:1025px;top:857px;width:1px;height:41px;background:#f3f6fd"></div>
<div class="a" style="left:1103px;top:857px;width:1px;height:41px;background:#f3f6fd"></div>
<div class="a" style="left:1176px;top:857px;width:1px;height:41px;background:#f3f6fd"></div>
<div class="a" style="left:1283px;top:857px;width:1px;height:41px;background:#f3f6fd"></div>
<div class="t" style="left:736px;top:870px;font-size:12px;line-height:18px">归档日期</div>
<div class="t" style="left:828px;top:870px;font-size:12px;line-height:18px">档案号</div>
<div class="t" style="left:978px;top:870px;font-size:12px;line-height:18px">密级</div>
<div class="t" style="left:1036px;top:870px;font-size:12px;line-height:18px">责任人</div>
<div class="t" style="left:1114px;top:870px;font-size:12px;line-height:18px">责任部门</div>
<div class="t" style="left:1187px;top:870px;font-size:12px;line-height:18px">全宗名称</div>
<div class="t" style="left:1294px;top:870px;font-size:12px;line-height:18px">文件标题</div>
<div class="a" style="left:1515px;top:870px;font-size:14px;line-height:20px;color:#54a7a9;white-space:nowrap">共计</div>
<div class="a" style="left:1848px;top:861px;width:32px;height:26px;border-radius:50%;background:#54a7a9;color:#fff;font-size:14px;line-height:26px;text-align:center">2</div>
<div class="a" style="left:1899px;top:62px;width:10px;height:826px;background:rgba(100,95,110,.065)"></div>
<div class="a" style="left:1899px;top:62px;width:10px;height:683px;border-radius:5px;background:#aaaaaa"></div>
</div>
<div class="a" style="left:311px;top:61px;width:1598px;height:1px;background:#e6e6e8"></div>
<div class="a" style="left:310px;top:11px;width:1600px;height:877px;border:1px solid #e7e7e8;border-radius:5px;pointer-events:none"></div>
<div class="a" id="botline"></div>
</body>
</html>
